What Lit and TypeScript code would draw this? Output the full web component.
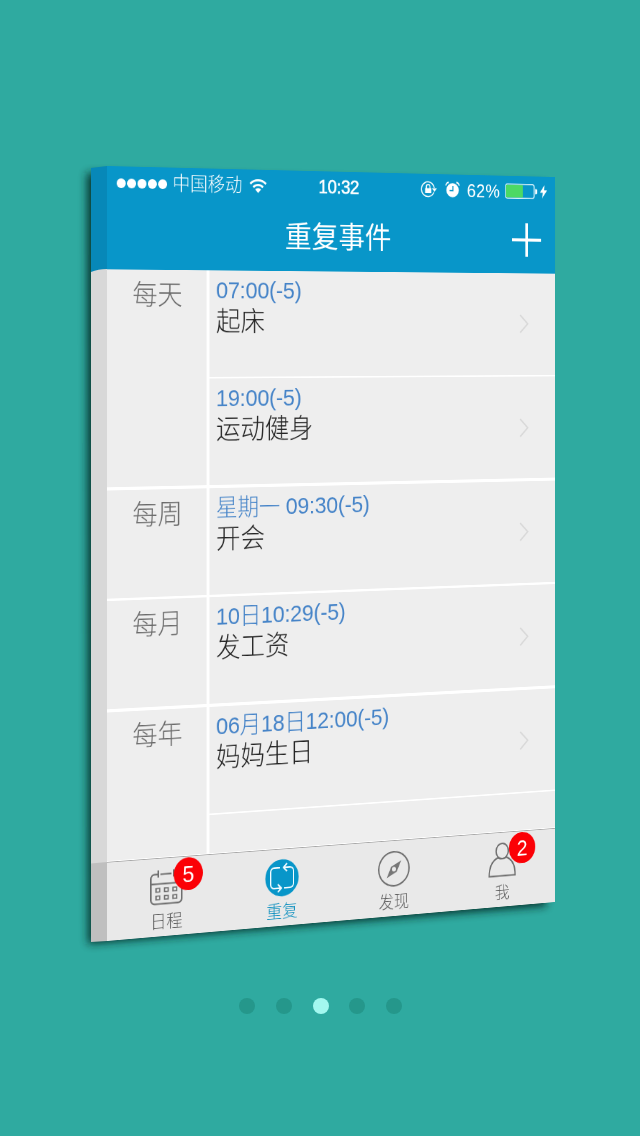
import { LitElement, html, css, svg } from "lit";
import { customElement, property } from "lit/decorators.js";

interface EventItem { time: string; name: string }
interface Group { label: string; items: EventItem[] }

const GROUPS: Group[] = [
  { label: "每天", items: [{ time: "07:00(-5)", name: "起床" }, { time: "19:00(-5)", name: "运动健身" }] },
  { label: "每周", items: [{ time: "星期一 09:30(-5)", name: "开会" }] },
  { label: "每月", items: [{ time: "10日10:29(-5)", name: "发工资" }] },
  { label: "每年", items: [{ time: "06月18日12:00(-5)", name: "妈妈生日" }] },
];

const calendarIcon = svg`
  <g fill="none" stroke="#6f6f6f" stroke-width="2">
    <path d="M16 7.500H31M37 7.500h3a5 5 0 0 1 5 5V39.500a5 5 0 0 1-5 5H8a5 5 0 0 1-5-5V12.500a5 5 0 0 1 5-5H13M3 19.500H45M13 2.500v9M34 2.500v9"/>
    <path d="M10 25h5v4.500h-5zM21.500 25h5v4.500h-5zM33 25h5v4.500h-5zM10 34.500h5v4.500h-5zM21.500 34.500h5v4.500h-5zM33 34.500h5v4.500h-5z" stroke-width="1.700"/>
  </g>`;
const repeatIcon = svg`
  <circle cx="24" cy="24" r="23.5" fill="#0896c9"/>
  <g fill="none" stroke="#f2fbff" stroke-width="2">
    <path d="M21 11H13a5 5 0 0 0-5 5V32a5 5 0 0 0 5 5H22M18 32l5 5-5 5"/>
    <path d="M27 37H35a5 5 0 0 0 5-5V16a5 5 0 0 0-5-5H26M31 6l-5 5 5 5"/>
  </g>`;
const compassIcon = svg`
  <circle cx="24" cy="24" r="22" fill="none" stroke="#6f6f6f" stroke-width="2"/>
  <path d="M34.500 14L28 28 13.500 35.500 20 21z" fill="#777"/>
  <circle cx="24" cy="24.500" r="3" fill="#e9e9e9"/>`;
const userIcon = svg`
  <g fill="none" stroke="#6f6f6f" stroke-width="2">
    <ellipse cx="24" cy="12" rx="9.200" ry="10"/>
    <path d="M17.500 20.500C9 24 4.500 33 4.500 44.500H43.500C43.500 33 39 24 30.500 20.500C27 22.500 21 22.500 17.500 20.500"/>
  </g>`;

const TABS = [
  { label: "日程", icon: calendarIcon, badge: "5", active: false },
  { label: "重复", icon: repeatIcon, badge: "", active: true },
  { label: "发现", icon: compassIcon, badge: "", active: false },
  { label: "我", icon: userIcon, badge: "2", active: false },
];

@customElement("phone-status")
export class PhoneStatus extends LitElement {
  static styles = css`
    :host { display: grid; grid-template-columns: 1fr auto 1fr; align-items: center; height: 40px; padding: 0 12px 0 13px; color: #fff; font-size: 24px; line-height: 30px; }
    .side { display: flex; align-items: center; }
    .signal { display: flex; gap: 2.5px; margin: 2px 8px 0 0; }
    .signal i { width: 11.5px; height: 11.5px; border-radius: 50%; background: #fff; }
    .carrier { font-weight: 300; }
    .wifi { margin-left: 9px; }
    .clock { -webkit-text-stroke: 0.6px #fff; letter-spacing: -0.4px; }
    .right { justify-content: flex-end; }
    .lock { margin-right: 12px; }
    .alarm { margin-right: 10px; }
    .percent { margin: 2px 7px 0 0; letter-spacing: 0.6px; }
    .bolt { margin-left: 4px; }
  `;
  render() {
    return html`
      <div class="side">
        <div class="signal">${[0, 1, 2, 3, 4].map(() => html`<i></i>`)}</div>
        <span class="carrier">中国移动</span>
        <svg class="wifi" width="25" height="19" viewBox="0 0 25 19">
          <path d="M1.500 7a15.500 15.500 0 0 1 22 0M5.700 11.200a9.600 9.600 0 0 1 13.600 0" fill="none" stroke="#fff" stroke-width="2.800"/>
          <path d="M8.300 14a6 6 0 0 1 8.400 0L12.500 18.500z" fill="#fff"/>
        </svg>
      </div>
      <span class="clock">10:32</span>
      <div class="side right">
        <svg class="lock" width="24" height="22" viewBox="0 0 24 22">
          <path d="M19.500 14.500A9.500 9.500 0 1 1 20 9" fill="none" stroke="#fff" stroke-width="1.500"/>
          <path d="M16.500 9.500h7.500l-3.700 4.500z" fill="#fff"/>
          <rect x="6.500" y="9.500" width="9" height="6.500" fill="#fff"/>
          <path d="M8.300 10V7.500a2.700 2.700 0 0 1 5.400 0V10" fill="none" stroke="#fff" stroke-width="1.500"/>
        </svg>
        <svg class="alarm" width="22" height="22" viewBox="0 0 22 22">
          <circle cx="11" cy="11.500" r="9.200" fill="#fff"/>
          <path d="M1.200 5.500A4 4 0 0 1 5.500 1.500M20.800 5.500A4 4 0 0 0 16.500 1.500" stroke="#fff" stroke-width="1.800" fill="none"/>
          <path d="M11.500 6V12H6.500" fill="none" stroke="#0896c9" stroke-width="1.800"/>
        </svg>
        <span class="percent">62%</span>
        <svg width="49" height="20" viewBox="0 0 49 20">
          <rect x="0.800" y="0.800" width="43.400" height="18.400" rx="3" fill="none" stroke="#d3f0fa" stroke-width="1.400"/>
          <rect x="1.800" y="1.800" width="25.200" height="16.400" rx="1" fill="#4cd964"/>
          <path d="M46 6.500a3.500 3.500 0 0 1 0 7z" fill="#fff"/>
        </svg>
        <svg class="bolt" width="11" height="18" viewBox="0 0 11 18"><path d="M7 0L0 10.200H4.500L3 18 11 7H6.200z" fill="#fff"/></svg>
      </div>`;
  }
}

@customElement("event-group")
export class EventGroup extends LitElement {
  @property({ attribute: false }) group!: Group;
  static styles = css`
    :host { display: grid; grid-template-columns: 135px 1fr; column-gap: 4px; }
    .label { background: #eee; color: #6a6a6a; font-size: 34px; font-weight: 300; line-height: 44px; padding: 9px 0 0 1px; text-align: center; }
    .items { display: grid; row-gap: 2.5px; }
    .item { box-sizing: border-box; height: 133.8px; background: #eee; padding: 6px 40px 0 9px; display: grid; grid-template-columns: 1fr auto; }
    .time { color: #4684c8; font-size: 30px; font-weight: 300; line-height: 38px; height: 38px; letter-spacing: -0.25px; }
    .name { color: #222; font-size: 34px; font-weight: 300; line-height: 40px; height: 40px; }
    .chevron { align-self: center; margin-bottom: 6px; }
  `;
  render() {
    return html`
      <div class="label">${this.group.label}</div>
      <div class="items">
        ${this.group.items.map((e) => html`
          <div class="item">
            <div><div class="time">${e.time}</div><div class="name">${e.name}</div></div>
            <svg class="chevron" width="14" height="25" viewBox="0 0 14 25"><path d="M1.200 1L12.500 12.500 1.200 24" fill="none" stroke="#d8d8d8" stroke-width="2"/></svg>
          </div>`)}
      </div>`;
  }
}

@customElement("tab-bar")
export class TabBar extends LitElement {
  static styles = css`
    :host { display: grid; grid-template-columns: repeat(4, 1fr); box-sizing: border-box; height: 98px; flex: none; background: #e9e9e9; border-top: 1px solid #a8a8a8; }
    .tab { display: flex; flex-direction: column; align-items: center; padding-top: 12px; color: #606060; }
    .active { color: #1492c0; }
    .icon { position: relative; width: 48px; height: 48px; }
    .text { font-size: 22px; font-weight: 300; line-height: 30px; margin-top: 4px; }
    .badge { position: absolute; left: 34px; top: -11px; width: 40px; height: 41px; border-radius: 50%; background: #fb0006; color: #fff; font-size: 29px; line-height: 43px; text-align: center; }
  `;
  render() {
    return html`${TABS.map((t) => html`
      <div class="tab ${t.active ? "active" : ""}">
        <div class="icon">
          <svg width="48" height="48" viewBox="0 0 48 48">${t.icon}</svg>
          ${t.badge ? html`<span class="badge">${t.badge}</span>` : ""}
        </div>
        <span class="text">${t.label}</span>
      </div>`)}`;
  }
}

@customElement("app-root")
export class AppRoot extends LitElement {
  static styles = css`
    :host { display: flex; flex-direction: column; width: 640px; height: 1136px; overflow: hidden; background: #2faaa0; font-family: "Liberation Sans", "Noto Sans CJK SC", sans-serif; }
    .scene { display: grid; height: 998px; grid-template: 998px / 640px; }
    .scene > * { grid-area: 1 / 1; }
    /* Perspective turn around the left edge of the phone; the clear padding keeps slanted edges smooth. */
    .phone {
      width: 640px; height: 960px; padding: 2px 0; margin-top: -2px; display: flex; flex-direction: column;
      transform-origin: 0 2px;
      transform: matrix3d(0.75981, 0.036261, 0, 0.000107759, 0, 0.80729, 0, 0, 0, 0, 1, 0, 107, 166, 0, 1);
    }
    .header { height: 128px; background: #0896c9; flex: none; }
    .nav { display: grid; grid-template-columns: 1fr auto 1fr; align-items: center; height: 88px; padding: 0 21px; color: #fff; }
    .title { grid-column: 2; font-size: 38px; line-height: 50px; }
    .plus { justify-self: end; margin-bottom: 1px; }
    .list { flex: 1; min-height: 0; overflow: hidden; display: flex; flex-direction: column; gap: 3.7px; background: #fff; }
    .rest { display: grid; grid-template-columns: 135px 1fr; column-gap: 4px; height: 50px; margin-top: -3.7px; flex: none; }
    .rest .l { background: #eee; }
    .rest .r { background: #eee; margin-top: 2px; }
    .pager { display: flex; justify-content: center; gap: 20.75px; padding-left: 1px; }
    .dot { width: 16px; height: 16px; border-radius: 50%; background: #25978b; }
    .on { background: #a3f8ef; }
  `;
  render() {
    return html`
      <div class="scene">
        <svg width="640" height="998" viewBox="0 0 640 998">
          <defs><filter id="soft" x="-10%" y="-10%" width="120%" height="120%"><feGaussianBlur stdDeviation="4"/></filter></defs>
          <path d="M87 173L546 184V906L88 944z" fill="#04211f" opacity="0.850" filter="url(#soft)"/>
          <path d="M91 168L107 166V273H91z" fill="#0788b8"/>
          <path d="M91 272Q98 269 107 269V864H91z" fill="#d8d8d8"/>
          <path d="M91 863.500L107 862V941L91 942z" fill="#bfbfbf"/>
        </svg>
        <div class="phone">
          <div class="header">
            <phone-status></phone-status>
            <div class="nav">
              <span class="title">重复事件</span>
              <svg class="plus" width="44" height="44" viewBox="0 0 44 44"><path d="M22 0V44M0 22H44" stroke="#fff" stroke-width="4"/></svg>
            </div>
          </div>
          <div class="list">
            ${GROUPS.map((g) => html`<event-group .group=${g}></event-group>`)}
            <div class="rest"><div class="l"></div><div class="r"></div></div>
          </div>
          <tab-bar></tab-bar>
        </div>
      </div>
      <div class="pager">${[0, 1, 2, 3, 4].map((i) => html`<span class="dot ${i === 2 ? "on" : ""}"></span>`)}</div>`;
  }
}
